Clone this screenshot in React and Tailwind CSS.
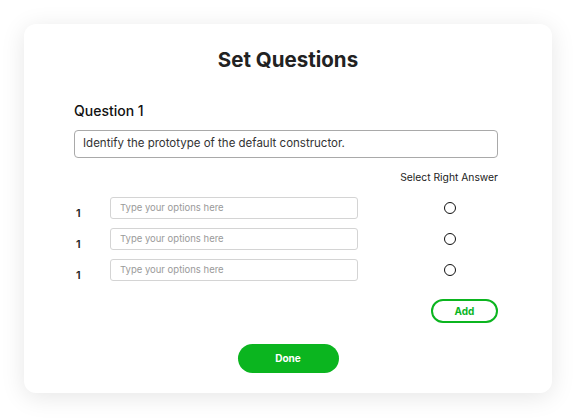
import React from "react";

const F = "font-['Inter','Noto_Sans',sans-serif]";

function Row() {
  return (
    <div className="flex items-center h-[22px]">
      <div className="w-[36px] text-[11px] font-semibold text-[#222] pl-[2px] pt-[10px]">1</div>
      <div className="w-[248px] h-[22px] border border-[#d4d4d4] rounded-[3px] flex items-center pl-[9px] text-[9.5px] text-[#9a9a9a]">
        Type your options here
      </div>
      <div className="flex-1 flex justify-end pr-[42px]">
        <div className="w-[12px] h-[12px] rounded-full border-[1.3px] border-[#111]" />
      </div>
    </div>
  );
}

export default function App() {
  return (
    <div className={`w-[576px] h-[418px] bg-white pt-6 px-6 ${F}`}>
      <div className="h-[369px] bg-white rounded-xl shadow-[0_4px_24px_rgba(0,0,0,0.10)] px-[50px] pt-[22px] flex flex-col">
        <h1 className="text-center text-[20.5px] leading-[28px] font-bold text-[#222]">Set Questions</h1>
        <div className="mr-[4px] flex flex-col">
          <div className="mt-[27px] text-[14px] leading-[20px] font-medium text-[#111]">Question 1</div>
          <div className="mt-[9px] h-[28px] border border-[#a9a9a9] rounded-[4px] flex items-center pl-[8px] text-[11.5px] text-[#333]">
            Identify the prototype of the default constructor.
          </div>
          <div className="mt-[12px] text-right text-[10.3px] text-[#222] leading-[14px]">Select Right Answer</div>
          <div className="mt-[13px] flex flex-col gap-[9px]">
            <Row />
            <Row />
            <Row />
          </div>
          <div className="mt-[18px] flex justify-end">
            <button className="w-[67px] h-[24px] rounded-full border-2 border-[#0bb51f] text-[#0bb51f] text-[10px] font-bold">Add</button>
          </div>
        </div>
        <div className="mt-[21px] flex justify-center">
          <button className="w-[101px] h-[29px] rounded-full bg-[#0bb51f] text-white text-[10px] font-bold">Done</button>
        </div>
      </div>
    </div>
  );
}
